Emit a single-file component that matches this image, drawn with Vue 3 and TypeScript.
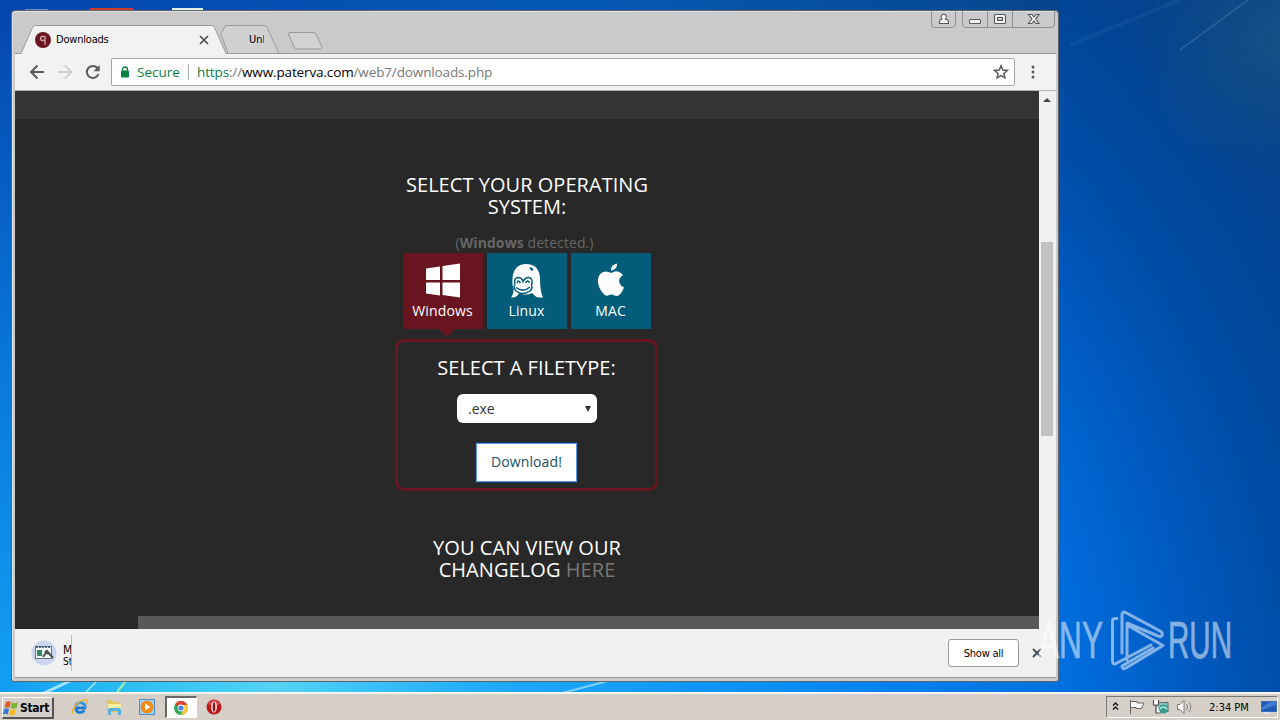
<script setup lang="ts">
interface OsTile {
  id: 'windows' | 'linux' | 'mac'
  label: string
  active: boolean
}

const systems: OsTile[] = [
  { id: 'windows', label: 'Windows', active: true },
  { id: 'linux', label: 'Linux', active: false },
  { id: 'mac', label: 'MAC', active: false },
]
</script>

<template>
  <div class="screen">
    <div class="desktop">
      <svg class="wallpaper" viewBox="0 0 1280 692" preserveAspectRatio="none">
        <defs>
          <radialGradient id="glow" gradientUnits="userSpaceOnUse" cx="350" cy="760" r="1130">
            <stop offset="0" stop-color="#38c6f4" />
            <stop offset="0.3" stop-color="#129af6" />
            <stop offset="0.6" stop-color="#0074e6" />
            <stop offset="0.65" stop-color="#006cdc" />
            <stop offset="0.72" stop-color="#005fc8" />
            <stop offset="0.8" stop-color="#0051b0" />
            <stop offset="0.87" stop-color="#00499f" />
            <stop offset="1" stop-color="#04408a" />
          </radialGradient>
          <linearGradient id="leftEdge" x1="0" y1="0" x2="0" y2="1">
            <stop offset="0" stop-color="#0545ab" />
            <stop offset="0.5" stop-color="#0874d8" />
            <stop offset="1" stop-color="#12a0f4" />
          </linearGradient>
          <linearGradient id="topEdge" x1="0" y1="0" x2="1" y2="0">
            <stop offset="0" stop-color="#0446ae" />
            <stop offset="0.55" stop-color="#0559b5" />
            <stop offset="1" stop-color="#06458c" />
          </linearGradient>
          <linearGradient id="bottomEdge" x1="0" y1="0" x2="1" y2="0">
            <stop offset="0" stop-color="#109cf2" />
            <stop offset="0.12" stop-color="#2bc0f3" />
            <stop offset="0.26" stop-color="#53d3f5" />
            <stop offset="0.45" stop-color="#20adfa" />
            <stop offset="0.75" stop-color="#078cf5" />
            <stop offset="1" stop-color="#0470e0" />
          </linearGradient>
          <radialGradient id="corner" gradientUnits="userSpaceOnUse" cx="1280" cy="40" r="150">
            <stop offset="0" stop-color="#1b5684" stop-opacity=".7" />
            <stop offset="1" stop-color="#1b5684" stop-opacity="0" />
          </radialGradient>
        </defs>
        <rect width="1280" height="692" fill="url(#glow)" />
        <rect width="14" height="692" fill="url(#leftEdge)" />
        <rect width="1060" height="14" fill="url(#topEdge)" />
        <rect y="680" width="1060" height="12" fill="url(#bottomEdge)" />
        <rect x="1060" width="220" height="200" fill="url(#corner)" />
        <path d="M1180 50L1248 0" stroke="#5f8fc0" stroke-width="1.5" opacity=".4" />
        <path d="M1070 45L1180 0" stroke="#2c66a8" stroke-width="4" opacity=".25" />
        <path d="M42 694L70 681" stroke="#c5f1ff" stroke-width="3" opacity=".8" />
        <path d="M86 692L97 681" stroke="#a4e6ff" stroke-width="1.5" />
        <path d="M117 692L126 681" stroke="#a9f0a0" stroke-width="2" />
        <path d="M562 693L608 681" stroke="#9adcff" stroke-width="2" opacity=".8" />
        <rect x="25" y="9" width="23" height="3" fill="#6f8fc4" />
        <rect x="89" y="8" width="45" height="4" rx="2" fill="#cf3a2b" />
        <rect x="172" y="8" width="31" height="4" fill="#e4eee8" />
      </svg>

      <div class="window">
        <div class="tabstrip">
          <svg class="tabshapes" width="1044" height="43" viewBox="15 11 1044 43">
            <path d="M15 53.5H1056" stroke="#999b9b" />
            <path d="M221 34L225.5 25.5H264Q266 25.500 267 27.500L279 53.500H228Z" fill="#d0d0d0" stroke="#999b9b" />
            <path d="M15 54V53.500H21L32.500 27.500Q33.500 25.500 35.500 25.500H211.500Q213.500 25.500 214.500 27.500L226 53.500V54Z" fill="#f2f2f2" />
            <path d="M15 53.500H21L32.500 27.500Q33.500 25.500 35.500 25.500H211.500Q213.500 25.500 214.500 27.500L226 53.500" fill="none" stroke="#999b9b" />
            <path d="M289 32.500H313Q315 32.500 316 34L322 47.500Q322 49 320.500 49H297Q295 49 294 47L288.500 34Q288 33 289 32.500Z" fill="#d2d2d2" stroke="#999b9b" />
            <path d="M931.500 11V24Q931.500 27.500 935 27.500H952Q955.500 27.500 955.500 24V11M962.500 11V24Q962.500 27.500 966 27.500H1051Q1054.500 27.500 1054.500 24V11M987.500 11V27M1012.500 11V27" fill="none" stroke="#8e8e8e" />
            <g fill="#f7f7f7" stroke="#55585c" stroke-width="1.100">
              <path d="M939.500 23.500Q938.800 19.500 942 19Q940.500 17 941.500 15.500Q943.500 13 946 15.500Q947 17.500 945.500 19Q949 19.500 948.500 23.500Z" />
              <rect x="969.500" y="19.500" width="11" height="4" rx="1" />
              <rect x="994.500" y="14.500" width="11" height="9" rx="1" />
              <rect x="997.500" y="17.500" width="5" height="3" fill="#cacaca" />
              <path d="M1028.500 14.500H1032L1034 16.800L1036 14.500H1039L1035.600 18.800L1039 23.500H1036L1034 21L1032 23.500H1028.500L1032 18.800Z" />
            </g>
          </svg>
          <div class="tab active">
            <svg class="favicon" width="16" height="16" viewBox="0 0 16 16">
              <circle cx="8" cy="8" r="8" fill="#6b1622" />
              <path d="M10 4V13M10 4.500H7.500Q5.500 4.500 5.500 6.500T7.500 8.500H10" fill="none" stroke="#c9a4aa" stroke-width="1.300" />
            </svg>
            <span class="tabtitle">Downloads</span>
            <svg class="tabclose" width="10" height="10" viewBox="0 0 10 10">
              <path d="M1 1L9 9M9 1L1 9" stroke="#4c4c4c" stroke-width="1.700" />
            </svg>
          </div>
          <div class="tab second"><span>Unl</span></div>
        </div>

        <div class="toolbar">
          <svg class="nav" width="96" height="36" viewBox="15 54 96 36">
            <path d="M44 72H31.500M37.500 65.500L31 72L37.500 78.500" fill="none" stroke="#5a5a5a" stroke-width="2" />
            <path d="M58 72H70.500M65 65.500L71.500 72L65 78.500" fill="none" stroke="#cfcfcf" stroke-width="2" />
            <path d="M97.800 68.500A6 6 0 1 0 98.500 74" fill="none" stroke="#5a5a5a" stroke-width="2" />
            <path d="M99.700 65V71.300H93.400Z" fill="#5a5a5a" />
          </svg>
          <div class="omnibox">
            <svg class="lock" width="10" height="12" viewBox="0 0 10 12">
              <path d="M2.500 5V3.500Q2.500 1 5 1T7.500 3.500V5" fill="none" stroke="#0b8043" stroke-width="1.400" />
              <rect x="1" y="4.500" width="8" height="7" rx="1" fill="#0b8043" />
            </svg>
            <span class="secure">Secure</span>
            <span class="divider"></span>
            <span class="url"><span class="scheme">https</span>://<span class="host">www.paterva.com</span>/web7/downloads.php</span>
            <svg class="star" width="16" height="16" viewBox="0 0 16 16">
              <path d="M8 1.800L9.800 6L14.300 6.400L10.900 9.400L11.900 13.800L8 11.500L4.100 13.800L5.100 9.400L1.700 6.400L6.200 6Z" fill="none" stroke="#5a5a5a" stroke-width="1.500" />
            </svg>
          </div>
          <svg class="menu" width="4" height="14" viewBox="0 0 4 14">
            <circle cx="2" cy="2" r="1.500" fill="#5a5a5a" />
            <circle cx="2" cy="7" r="1.500" fill="#5a5a5a" />
            <circle cx="2" cy="12" r="1.500" fill="#5a5a5a" />
          </svg>
        </div>

        <div class="viewport">
          <main class="page">
            <div class="band"></div>
            <section class="content">
              <h2 class="heading choose"><span>SELECT YOUR OPERATING</span><span>SYSTEM:</span></h2>
              <p class="detected">(<b>Windows</b> detected.)</p>
              <div class="tiles">
                <div v-for="os in systems" :key="os.id" class="tile" :class="{ selected: os.active }">
                  <svg v-if="os.id === 'windows'" width="36" height="36" viewBox="0 0 36 36" fill="#fff">
                    <path d="M1 5.500L15 3.500V17H1ZM17.500 3L35 .500V17H17.500ZM1 19.500H15V32.500L1 30.500ZM17.500 19.500H35V34.500L17.500 32Z" />
                  </svg>
                  <svg v-else-if="os.id === 'linux'" width="36" height="36" viewBox="0 0 36 36">
                    <path d="M2 34.500Q5 31 4.500 25Q3 22 3.500 15Q5 1 17 1Q30 1 31 15Q31 29 34 34.500Q28 35 26 33L23 30Q17 33 10 30Q8 35 2 34.500Z" fill="#fff" />
                    <path d="M6 21Q4.500 15 9 14.500Q13 14.500 14 18.500Q16.500 14 20 14.500Q24.500 15.500 22.500 22Q24 25 21 28Q14 33 7 28Q4 25 6 21" fill="none" stroke="#025c7a" stroke-width="1.500" />
                    <path d="M8 20Q9 16 11.500 20M16.500 20Q18.500 16 20.500 20M7 24.500Q14 30 21 24" fill="none" stroke="#025c7a" stroke-width="1.500" />
                    <ellipse cx="22.500" cy="6" rx="2" ry="1.300" transform="rotate(35 22.500 6)" fill="#025c7a" />
                  </svg>
                  <svg v-else width="36" height="36" viewBox="0 0 36 36" fill="#fff">
                    <path d="M18.500 10Q22 7.500 25.500 8.800Q28 9.500 30 12Q25 15 26.500 20Q27.500 23 31 24.500Q28 32 24.500 33Q22 33 19.500 31.500Q17.500 31.200 15 32.500Q12 33.500 9 29Q4 22 5 16Q6.500 8.500 13 8.500Q15 8.500 18.500 10Z" />
                    <path d="M18 7.800Q17.500 2 24 .500Q24.500 6.500 18 7.800Z" />
                  </svg>
                  <span>{{ os.label }}</span>
                </div>
              </div>
              <div class="filebox">
                <h2 class="heading filetype">SELECT A FILETYPE:</h2>
                <div class="select"><span>.exe</span><i class="caret"></i></div>
                <button class="download">Download!</button>
              </div>
              <h2 class="heading changelog"><span>YOU CAN VIEW OUR</span><span>CHANGELOG <a>HERE</a></span></h2>
            </section>
            <div class="footer"></div>
          </main>
          <div class="scrollbar">
            <i class="up"></i>
            <div class="thumb"></div>
          </div>
        </div>

        <div class="shelf">
          <svg class="dlicon" width="26" height="26" viewBox="0 0 26 26">
            <circle cx="13" cy="13" r="12.500" fill="#cbd5ee" />
            <rect x="4.500" y="6.500" width="16" height="12" fill="#f7fbfc" stroke="#65747b" />
            <path d="M5 7H20" stroke="#456788" stroke-width="2" stroke-dasharray="2 1" />
            <rect x="6" y="10" width="5" height="6" fill="#36866c" />
            <path d="M12 17L16 11L22 18M14 11L17 14" fill="none" stroke="#47524c" stroke-width="2" />
          </svg>
          <div class="dltext"><span class="name">M</span><span class="status">St</span></div>
          <div class="showall">Show all</div>
          <svg class="shelfclose" width="10" height="10" viewBox="0 0 10 10">
            <path d="M1 1L9 9M9 1L1 9" stroke="#4c4c4c" stroke-width="1.900" />
          </svg>
        </div>
      </div>

      <div class="watermark">
        <span class="any">ANY</span>
        <svg width="56" height="64" viewBox="0 0 56 64" fill="none" stroke="#fff" stroke-width="3" stroke-linejoin="round" stroke-linecap="round">
          <path d="M8 9.500H6Q3.500 9.500 3.500 12V52Q3.500 56 7 54.500L42 36M13 44V6Q13 2 16.500 3.500L52 22.500Q54 24 53 26.500Q51.500 28.500 49 27L18 14V51M18 16L54 36.500L17 59Q13 61 13 57L44 39" />
        </svg>
        <span class="run">RUN</span>
      </div>
    </div>

    <footer class="taskbar">
      <div class="start">
        <svg width="16" height="16" viewBox="0 0 16 16">
          <path d="M3 2Q5 .500 8 2L6.500 8Q4 6.500 1.500 8Z" fill="#e65c26" />
          <path d="M9 2.500Q12 4 15 2L13.500 8Q10.500 9.500 7.500 8Z" fill="#79b530" />
          <path d="M1 9Q3.500 7.500 6 9L4.800 14.500Q2.500 13 0 14.500Z" fill="#3c78ce" />
          <path d="M7.200 9.200Q10 10.500 13 9L11.800 14.500Q9 16 5.800 14.500Z" fill="#f5b921" />
        </svg>
        <span>Start</span>
      </div>
      <div class="launch">
        <svg width="18" height="18" viewBox="0 0 18 18">
          <path d="M15 10H5Q5 14.500 9 14.500Q11.500 14.500 13.500 12.500" fill="none" stroke="#1e7ed2" stroke-width="2.800" />
          <path d="M4.500 9.500Q5 4.500 9.500 4.500Q14 5 14.500 10" fill="none" stroke="#2f94e4" stroke-width="2.800" />
          <path d="M2 16Q0 13 4.500 7.500Q11 1 15.500 2Q17.500 3 15.500 6" fill="none" stroke="#e9b62c" stroke-width="1.500" />
        </svg>
      </div>
      <div class="launch">
        <svg width="18" height="18" viewBox="0 0 18 18">
          <path d="M2 2H7L8.500 4H15V14H2Z" fill="#e3c562" />
          <path d="M3 6H16V12H3Z" fill="#fbeea0" />
          <path d="M3 17V12Q3 10 5 10H14Q16 10 16 12V17H13V13H6V17Z" fill="#5aaee0" />
        </svg>
      </div>
      <div class="launch">
        <svg width="18" height="18" viewBox="0 0 18 18">
          <rect x="1.500" y="1.500" width="15" height="15" fill="#a5cdef" stroke="#4a90cf" />
          <circle cx="9" cy="9" r="6.300" fill="#f08a12" />
          <path d="M7 5.500L12.500 9L7 12.500Z" fill="#fff" />
        </svg>
      </div>
      <div class="launch pressed">
        <svg width="16" height="16" viewBox="0 0 16 16">
          <circle cx="8" cy="8" r="7" fill="#35a65a" />
          <path d="M8 8L2 4.400A7 7 0 0 1 14.300 5H8Z" fill="#df4436" />
          <path d="M8 5H14.300A7 7 0 0 1 7.500 15L10.500 9.500Z" fill="#f8cb3e" />
          <circle cx="8" cy="8" r="3.400" fill="#fff" />
          <circle cx="8" cy="8" r="2.600" fill="#4584ee" />
        </svg>
      </div>
      <div class="launch">
        <svg width="16" height="16" viewBox="0 0 16 16">
          <circle cx="8" cy="8" r="7.500" fill="#bd1519" />
          <path d="M2 5Q8 -3 14 5Q8 8 2 5Z" fill="#e7686b" opacity=".7" />
          <ellipse cx="8" cy="8" rx="2.900" ry="5.600" fill="#f5eaea" />
          <ellipse cx="8" cy="8" rx="1.300" ry="4.700" fill="#8f0e13" />
        </svg>
      </div>
      <div class="tray">
        <svg width="84" height="20" viewBox="1108 697 84 20">
          <path d="M1113 705.500L1115.500 703L1118 705.500M1113 709.500L1115.500 707L1118 709.500" fill="none" stroke="#111" stroke-width="1.400" />
          <path d="M1130.500 700V714M1130.500 701.500H1137V703H1144L1141.500 708.500H1136V707.500H1130.500" fill="#fff" stroke="#666" />
          <rect x="1156" y="702.500" width="12" height="9" fill="#8fc4bb" stroke="#566b67" />
          <path d="M1153.500 700V705H1158.500V700M1156 705V713H1161" fill="#fff" stroke="#555" stroke-width="1.200" />
          <circle cx="1163.500" cy="709" r="4.500" fill="#35a092" />
          <path d="M1160 709Q1163 705 1167 709" fill="none" stroke="#e0fff6" stroke-width="1.200" />
          <path d="M1177.500 704.500H1180L1184 700.500V713.500L1180 709.500H1177.500Z" fill="#fff" stroke="#777" />
          <path d="M1186.500 704Q1188.500 707 1186.500 710M1189 702Q1192.500 707 1189 712" fill="none" stroke="#888" />
        </svg>
        <span class="clock">2:34 PM</span>
        <svg class="monitor" width="16" height="14" viewBox="0 0 16 14">
          <rect x=".5" y="1.500" width="15" height="10" fill="#1d59b5" stroke="#3970bd" />
          <path d="M1 7L9 2H15V5L1 10Z" fill="#4e8fe0" opacity=".7" />
          <path d="M3 13H9" stroke="#d7e7f5" stroke-width="1.500" />
        </svg>
      </div>
    </footer>
  </div>
</template>

<style>
html,
body {
  margin: 0;
  overflow: hidden;
}
</style>

<style scoped>
* {
  box-sizing: border-box;
}
.screen {
  width: 1280px;
  height: 720px;
  display: flex;
  flex-direction: column;
  overflow: hidden;
  font-family: "DejaVu Sans Condensed", "DejaVu Sans", sans-serif;
  font-size: 11px;
  color: #000;
}
svg {
  display: block;
  flex: none;
}
.desktop {
  position: relative;
  height: 692px;
  overflow: hidden;
}
.wallpaper {
  width: 1280px;
  height: 692px;
}
.window {
  position: absolute;
  left: 11px;
  top: 10px;
  width: 1048px;
  height: 672px;
  border: 1px solid #5d646b;
  border-radius: 4px 4px 3px 3px;
  background: #cacaca;
  padding: 0 3px 3px;
  display: flex;
  flex-direction: column;
  overflow: hidden;
  box-shadow: inset 1px 1px 0 #e2e2e2;
}
.tabstrip {
  position: relative;
  height: 43px;
  flex: none;
  display: flex;
  padding-top: 15px;
}
.tabshapes {
  position: absolute;
  left: 0;
  top: 0;
}
.tab {
  position: relative;
  display: flex;
  align-items: center;
  height: 27px;
}
.tab.active {
  width: 207px;
  padding: 0 13px 0 20px;
}
.tabtitle {
  margin-left: 5px;
  letter-spacing: -0.2px;
  flex: 1;
}
.tab.second {
  width: 42px;
  padding-left: 27px;
}
.tab.second span {
  width: 15px;
  overflow: hidden;
  white-space: nowrap;
}
.toolbar {
  height: 37px;
  flex: none;
  width: 1041px;
  display: flex;
  align-items: center;
  background: #f2f2f2;
  border-bottom: 1px solid #b6b6b6;
}
.omnibox {
  width: 904px;
  height: 28px;
  display: flex;
  align-items: center;
  border: 1px solid #a6a6a6;
  border-radius: 2px;
  background: #fff;
  padding: 0 5px 0 8px;
  font-family: "Open Sans", "Noto Sans", sans-serif;
  font-size: 13.5px;
  line-height: 20px;
  white-space: nowrap;
}
.secure {
  margin-left: 7px;
  width: 43px;
  color: #0b8043;
}
.divider {
  width: 1px;
  height: 16px;
  margin: 0 8px;
  background: #a8b3ac;
}
.url {
  flex: 1;
  color: #777;
  letter-spacing: -0.13px;
}
.scheme {
  color: #0b8043;
}
.host {
  color: #000;
}
.menu {
  margin-left: 16px;
}
.viewport {
  height: 538px;
  flex: none;
  width: 1041px;
  display: flex;
}
.page {
  width: 1024px;
  background: #282828;
  display: flex;
  flex-direction: column;
  font-family: "Open Sans", "Noto Sans", sans-serif;
  color: #fff;
}
.band {
  height: 28px;
  flex: none;
  background: #353535;
}
.content {
  flex: 1;
  display: flex;
  flex-direction: column;
  align-items: center;
  text-align: center;
}
.heading {
  margin: 0;
  font-size: 20px;
  line-height: 22px;
  font-weight: 400;
  white-space: nowrap;
  display: flex;
  flex-direction: column;
  align-items: center;
}
.choose {
  margin-top: 55px;
}
.choose span:first-child {
  letter-spacing: 0.04px;
}
.detected {
  margin: 14px 5px 0 0;
  color: #666;
  font-size: 14px;
  line-height: 22px;
  height: 20px;
  letter-spacing: 0.09px;
}
.tiles {
  display: flex;
  gap: 4px;
  margin-top: 1px;
}
.tile {
  width: 80px;
  height: 76px;
  display: flex;
  flex-direction: column;
  align-items: center;
  padding-top: 10px;
  background: #025c7a;
  font-size: 14px;
  line-height: 20px;
  position: relative;
}
.tile span {
  margin: 2px 1px 0 0;
  letter-spacing: 0.15px;
}
.tile.selected {
  background: #691520;
}
.tile.selected::after {
  content: "";
  position: absolute;
  top: 76px;
  left: 36px;
  border: 8px solid transparent;
  border-top-color: #691520;
  border-bottom: 0;
}
.filebox {
  width: 263px;
  height: 152px;
  margin: 10px 1px 0 0;
  border: 3px solid #691520;
  border-radius: 9px;
  display: flex;
  flex-direction: column;
  align-items: center;
}
.filetype {
  margin-top: 15px;
}
.select {
  width: 140px;
  height: 29px;
  margin: 15px 0 0 1px;
  border-radius: 6px;
  background: #fff;
  color: #333;
  font-size: 14px;
  line-height: 29px;
  padding: 0 6px 0 11px;
  display: flex;
  justify-content: space-between;
  align-items: center;
}
.caret {
  border: 3.500px solid transparent;
  border-top: 6px solid #333;
  border-bottom: 0;
}
.download {
  width: 101px;
  height: 39px;
  margin: 20px 0 0;
  padding: 0 0 2px;
  border: 1px solid #5a94dc;
  outline: 1px solid #1c3864;
  background: #fff;
  color: #174f69;
  font: 14px "Open Sans", sans-serif;
  letter-spacing: 0.1px;
}
.changelog {
  margin-top: 46px;
}
.changelog span {
  letter-spacing: 0.07px;
}
.changelog a {
  color: #777;
}
.footer {
  height: 13px;
  flex: none;
  margin-left: 123px;
  background: #595959;
}
.scrollbar {
  width: 17px;
  background: #f1f1f1;
  display: flex;
  flex-direction: column;
  padding: 7px 0 0 2px;
}
.up {
  width: 0;
  border: 4px solid transparent;
  border-bottom-color: #444;
  border-top: 0;
  margin-left: 2px;
}
.thumb {
  width: 12px;
  height: 194px;
  margin-top: 140px;
  background: #c1c1c1;
}
.shelf {
  flex: 1;
  width: 1041px;
  display: flex;
  align-items: center;
  background: #f1f1f1;
  border-bottom: 1px solid #999;
  padding: 0 14px 0 16px;
}
.dltext {
  width: 9px;
  height: 36px;
  margin: 0 0 0 6px;
  padding-top: 9px;
  border-right: 1px solid #bababa;
  overflow: hidden;
  display: flex;
  flex-direction: column;
  font-size: 12px;
  line-height: 13px;
}
.status {
  font-size: 10px;
  line-height: 9px;
}
.showall {
  width: 71px;
  height: 28px;
  margin-left: auto;
  border: 1px solid #9b9b9b;
  border-radius: 3px;
  background: #fff;
  text-align: center;
  line-height: 27px;
  letter-spacing: -0.25px;
}
.shelfclose {
  margin-left: 13px;
}
.watermark {
  position: absolute;
  left: 1038px;
  top: 609px;
  display: flex;
  align-items: center;
  color: #fff;
  opacity: 0.52;
}
.watermark span {
  display: block;
  height: 64px;
  font: 51px/64px "Liberation Sans", Arial, sans-serif;
  -webkit-text-stroke: 0.7px #fff;
  transform-origin: 0 50%;
  white-space: nowrap;
}
.any {
  width: 71px;
  transform: scaleX(0.62);
}
.run {
  width: 62px;
  margin-left: 3px;
  transform: scaleX(0.58);
}
.taskbar {
  height: 28px;
  display: flex;
  align-items: center;
  background: #d5cfc8;
  border-top: 2px solid #f6f5f2;
}
.start {
  width: 52px;
  height: 22px;
  margin: 2px 10px 0 2px;
  border: 1px solid #fff;
  border-right: 2px solid #555;
  border-bottom: 2px solid #555;
  display: flex;
  align-items: center;
  font-weight: 700;
  font-size: 12px;
  letter-spacing: -0.3px;
}
.start svg {
  margin-right: 1px;
}
.launch {
  width: 32px;
  height: 22px;
  margin: 0 1.600px 0 0;
  display: flex;
  align-items: center;
  justify-content: center;
}
.launch.pressed {
  background: #fff;
  border: 2px solid #666;
  border-right: 1px solid #fff;
  border-bottom: 1px solid #fff;
}
.tray {
  margin: 0 2px 0 auto;
  width: 172px;
  height: 22px;
  border: 1px solid #777;
  border-right-color: #fff;
  border-bottom-color: #fff;
  display: flex;
  align-items: center;
  padding-left: 1px;
}
.clock {
  width: 42px;
  margin-left: 17px;
  white-space: nowrap;
}
.monitor {
  margin-left: 10px;
}
</style>
